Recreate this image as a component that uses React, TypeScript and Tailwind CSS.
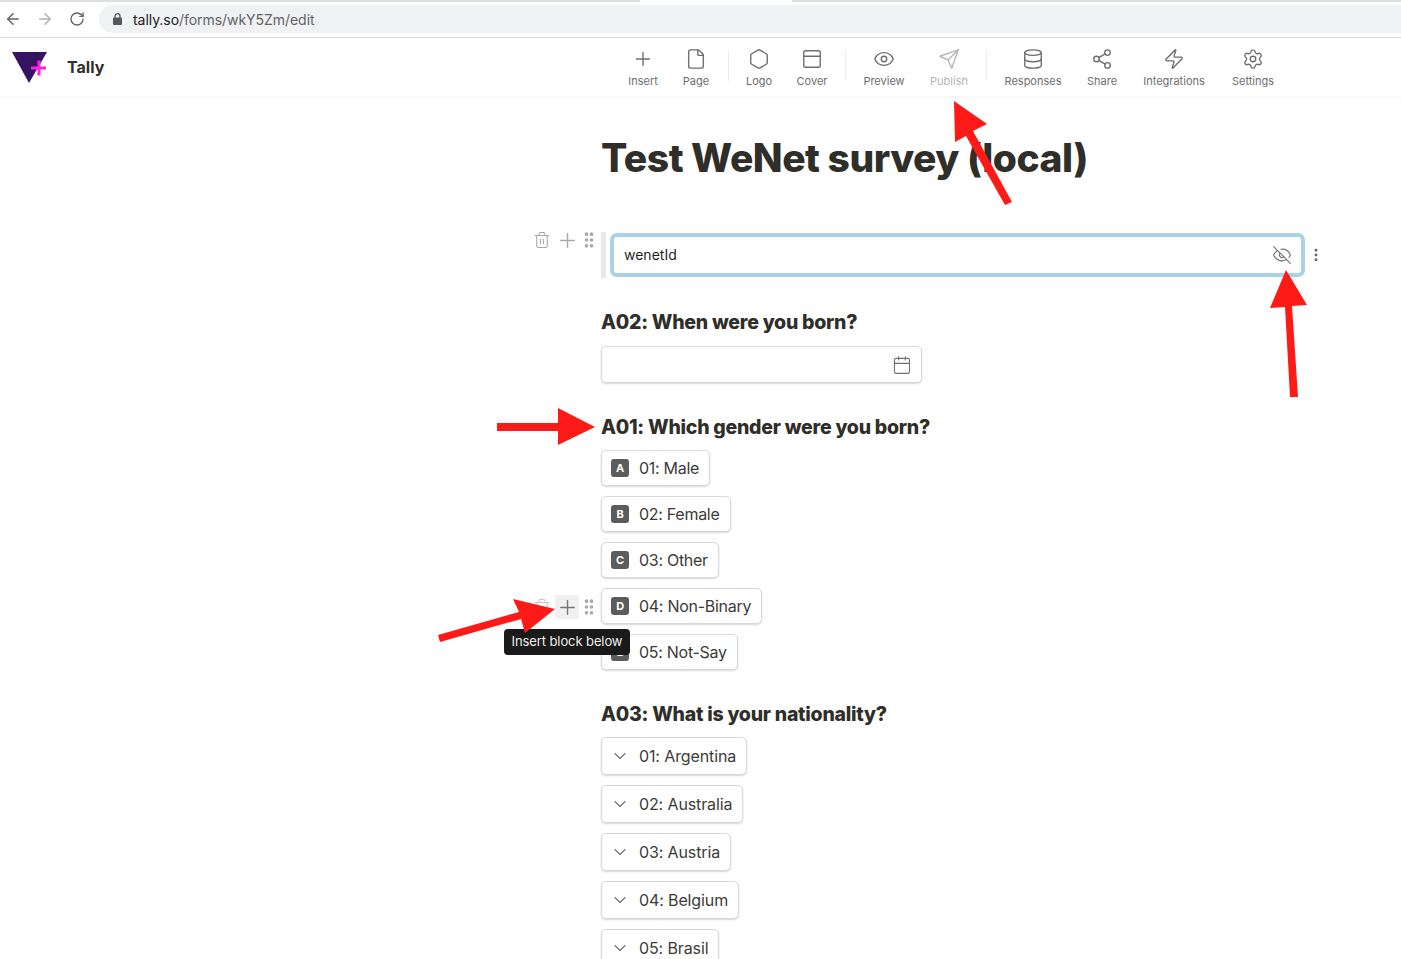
import { ArrowLeft, ArrowRight, RotateCw, Plus, File, Hexagon, PanelTop, Eye, EyeOff, Database, Share2, Zap, Settings, Calendar, ChevronDown, Trash2, GripVertical, MoreVertical } from "lucide-react";
import type { ComponentType } from "react";

function Send({ size = 22, strokeWidth = 1.2 }: { size?: number; strokeWidth?: number }) {
  return (
    <svg width={size} height={size} viewBox="0 0 24 24" fill="none" stroke="currentColor" strokeWidth={strokeWidth} strokeLinejoin="round" strokeLinecap="round">
      <path d="M22 2 11 13" />
      <path d="M22 2 15 22 11 13 2 9 22 2Z" />
    </svg>
  );
}

type IconT = ComponentType<{ size?: number; strokeWidth?: number }>;

function Tool({ icon: Icon, label, faded, width }: { icon: IconT; label: string; faded?: boolean; width: string }) {
  return (
    <div className={`flex flex-col items-center ${width} ${faded ? "text-[#b5b5b5]" : "text-[#6e6e6e]"}`}>
      <Icon size={22} strokeWidth={1.5} />
      <span className="mt-[4px] text-[11px] leading-[14px] whitespace-nowrap">{label}</span>
    </div>
  );
}

function Divider({ className = "mx-[5px]" }: { className?: string }) {
  return <div className={`${className} mt-[3px] h-[30px] w-px bg-[#ececec]`} />;
}

function GutterIcons({ hover }: { hover?: boolean }) {
  return (
    <>
      <Trash2 size={18} strokeWidth={1.4} className={hover ? "mr-[4px] text-[#c4c4c4]" : "mr-[4px]"} />
      <div className={`flex h-6 w-6 items-center justify-center rounded-[3px] ${hover ? "bg-[#f0f0f0] text-[#777]" : ""}`}>
        <Plus size={23} strokeWidth={1.5} />
      </div>
      <GripVertical size={20} strokeWidth={2.4} />
    </>
  );
}

function Option({ letter, label, hover }: { letter: string; label: string; hover?: boolean }) {
  return (
    <div className="relative w-fit">
      {hover && (
        <>
          <div className="absolute right-full top-[7px] mr-[2px] flex items-center text-[#a8a8a8]">
            <GutterIcons hover />
          </div>
          <div className="absolute left-[-97px] top-[41px] z-10 flex h-[26px] w-[126px] items-center justify-center rounded-[4px] bg-[#1a1a1a] text-[13px] tracking-[-0.1px] text-[#eeeeee] whitespace-nowrap">
            Insert block below
          </div>
        </>
      )}
      <div className="flex h-[36px] items-center rounded-[5px] border border-[#d9d9d9] bg-white pl-[9px] pr-[10px] text-[16px] tracking-[-0.28px] text-[#3c3b37] shadow-[0_1px_2px_rgba(0,0,0,0.16)]">
        <span className="mr-[10px] flex h-[18px] w-[18px] items-center justify-center rounded-[3px] bg-[#5c5c5c] text-[11px] font-bold text-white">{letter}</span>
        {label}
      </div>
    </div>
  );
}

function Select({ label }: { label: string }) {
  return (
    <div className="flex h-[38px] w-fit items-center rounded-[5px] border border-[#d9d9d9] bg-white pl-[8px] pr-[10px] text-[16px] tracking-[-0.12px] text-[#3c3b37] shadow-[0_1px_2px_rgba(0,0,0,0.16)]">
      <ChevronDown size={20} strokeWidth={1.4} className="mr-[9px] text-[#777]" />
      {label}
    </div>
  );
}

function Heading({ children, className }: { children: string; className: string }) {
  return <h2 className={`text-[19.5px] font-extrabold leading-[26px] tracking-[-0.25px] text-[#2f2e29] ${className}`}>{children}</h2>;
}

export default function App() {
  return (
    <div className="relative h-[959px] w-[1401px] overflow-hidden bg-white font-['Inter',sans-serif]">
      <header className="relative flex h-[38px] items-start border-b border-[#d8d8d8] bg-white pt-[5px]">
        <div className="absolute left-0 right-0 top-0 flex h-[2px]">
          <div className="w-[640px] bg-[#dedfe1]" />
          <div className="w-[152px] bg-white" />
          <div className="flex-1 bg-[#dedfe1]" />
        </div>
        <div className="flex h-[28px] w-[99px] items-center pl-[4px] text-[#5f6368]">
          <ArrowLeft size={18} strokeWidth={2} />
          <ArrowRight size={18} strokeWidth={2} className="ml-[14px] text-[#b0b2b5]" />
          <RotateCw size={16} strokeWidth={2} className="ml-[15px]" />
        </div>
        <div className="flex h-[28px] flex-1 items-center rounded-l-[14px] bg-[#f0f1f3] pl-[14px] text-[14px] tracking-[-0.05px] text-[#5f6368]">
          <svg width="9" height="12" viewBox="0 0 9 12" className="mr-[11px]" aria-hidden="true">
            <rect x="0" y="4.5" width="9" height="7.5" rx="1" fill="#55575a" />
            <path d="M2 5V3.2a2.5 2.5 0 0 1 5 0V5" fill="none" stroke="#55575a" strokeWidth="1.3" />
          </svg>
          <span className="text-[#202124]">tally.so</span>/forms/wkY5Zm/edit
        </div>
      </header>

      <nav className="flex h-[60px] items-start border-b-2 border-[#fafafa] pt-[10px]">
        <div className="flex w-[615px] items-center pl-[12px] pt-[2px]">
          <svg width="36" height="34" viewBox="0 0 36 34" aria-hidden="true">
            <path d="M0 2H35L17 33Z" fill="#361263" />
            <path d="M19 18H34M27 10.5V25.5" stroke="#ff1fe0" strokeWidth="3" fill="none" />
          </svg>
          <span className="ml-[19px] text-[16px] font-bold text-[#2f2e29]">Tally</span>
        </div>
        <Tool icon={Plus} label="Insert" width="w-[56px]" />
        <Tool icon={File} label="Page" width="w-[50px]" />
        <Divider className="ml-[7px] mr-[5px]" />
        <Tool icon={Hexagon} label="Logo" width="w-[50px]" />
        <Tool icon={PanelTop} label="Cover" width="w-[56px]" />
        <Divider />
        <Tool icon={Eye} label="Preview" width="w-[66px]" />
        <Tool icon={Send} label="Publish" width="w-[64px]" faded />
        <Divider />
        <Tool icon={Database} label="Responses" width="w-[82px]" />
        <Tool icon={Share2} label="Share" width="w-[56px]" />
        <Tool icon={Zap} label="Integrations" width="w-[88px]" />
        <Tool icon={Settings} label="Settings" width="w-[70px]" />
      </nav>

      <main className="ml-[601px] w-[704px]">
        <h1 className="mt-[34px] text-[39px] font-extrabold leading-[52px] tracking-[-0.5px] text-[#2f2e29] whitespace-nowrap">Test WeNet survey (local)</h1>

        <div className="relative mt-[48px] flex h-[46px] items-center">
          <div className="absolute right-full top-[-4px] mr-[2px] flex items-center text-[#a8a8a8]">
            <GutterIcons />
          </div>
          <div className="h-full w-[5px] bg-[#e9e9e9]" />
          <div className="ml-[4px] flex h-[44px] flex-1 items-center justify-between rounded-[7px] border-[4px] border-[#a9d1ea] bg-white pb-[1px] pl-[10px] pr-[9px] text-[14px] text-[#1f1f1f]">
            wenetId
            <EyeOff size={20} strokeWidth={1.4} className="text-[#777]" />
          </div>
          <MoreVertical size={16} strokeWidth={2.4} className="absolute left-full top-[15px] ml-[3px] text-[#666]" />
        </div>

        <Heading className="mt-[31px]">A02: When were you born?</Heading>
        <div className="mt-[11px] flex h-[37px] w-[321px] items-center justify-end rounded-[5px] border border-[#d9d9d9] bg-white pr-[9px] shadow-[0_1px_2px_rgba(0,0,0,0.16)]">
          <Calendar size={20} strokeWidth={1.3} className="text-[#707070]" />
        </div>

        <Heading className="mt-[31px]">A01: Which gender were you born?</Heading>
        <div className="mt-[10px] flex flex-col gap-[10px]">
          <Option letter="A" label="01: Male" />
          <Option letter="B" label="02: Female" />
          <Option letter="C" label="03: Other" />
          <Option letter="D" label="04: Non-Binary" hover />
          <Option letter="E" label="05: Not-Say" />
        </div>

        <Heading className="mt-[31px]">A03: What is your nationality?</Heading>
        <div className="mt-[10px] flex flex-col gap-[10px]">
          <Select label="01: Argentina" />
          <Select label="02: Australia" />
          <Select label="03: Austria" />
          <Select label="04: Belgium" />
          <Select label="05: Brasil" />
        </div>
      </main>

      <svg className="pointer-events-none absolute left-0 top-0 z-20" width="1401" height="959" viewBox="0 0 1401 959" aria-hidden="true">
        <g fill="#fe1a16">
          <path d="M954 101 987 124 973 131 1012 202 1005 205 966 136 955 142Z" />
          <path d="M1286 270 1307 305 1292 306 1298 397 1290 397 1285 307 1270 308Z" />
          <path d="M595 427 558 408V423H497V431H558V445Z" />
          <path d="M555 609 525 633 521 619 440 642 438 635 519 612 513 599Z" />
        </g>
      </svg>
    </div>
  );
}
